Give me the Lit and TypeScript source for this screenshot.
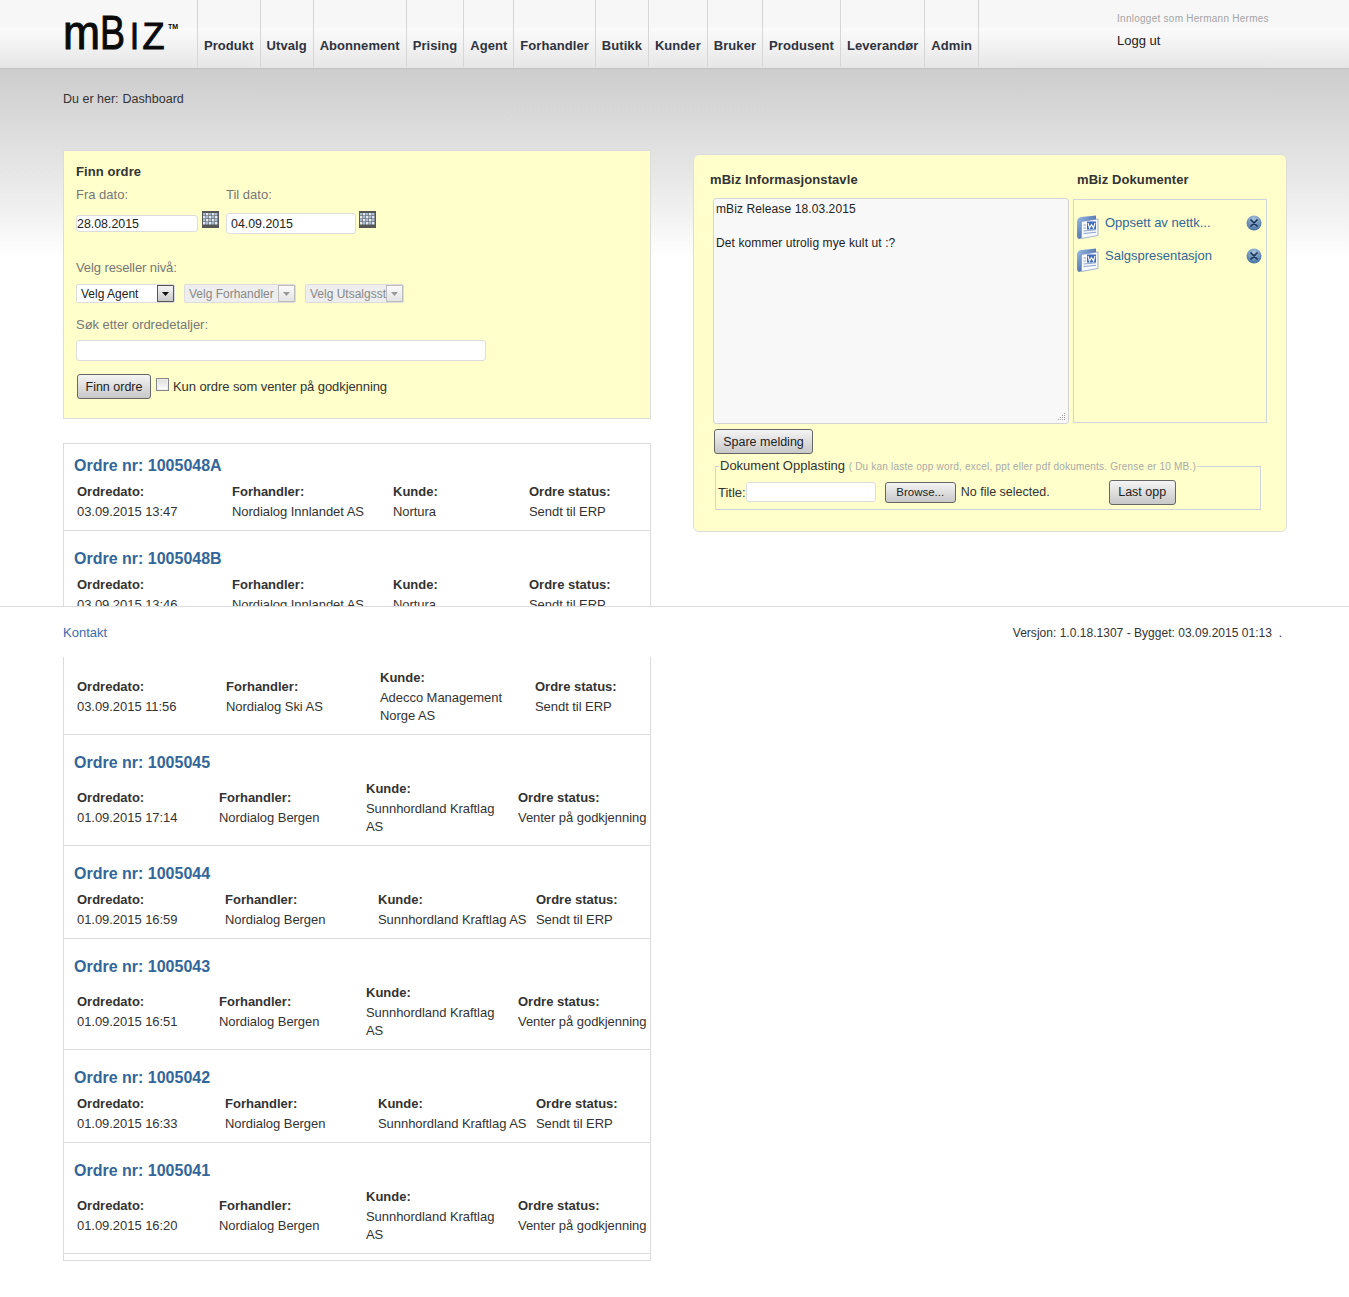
import { LitElement, html, css, svg } from "lit";
import { customElement } from "lit/decorators.js";

const NAV = ["Produkt", "Utvalg", "Abonnement", "Prising", "Agent", "Forhandler", "Butikk", "Kunder", "Bruker", "Produsent", "Leverandør", "Admin"];

type Order = { nr: string; date: string; dealer: string; customer: string[]; status: string; cols: string };

const ORDERS: Order[] = [
  { nr: "1005048A", date: "03.09.2015 13:47", dealer: "Nordialog Innlandet AS", customer: ["Nortura"], status: "Sendt til ERP", cols: "wide" },
  { nr: "1005048B", date: "03.09.2015 13:46", dealer: "Nordialog Innlandet AS", customer: ["Nortura"], status: "Sendt til ERP", cols: "wide" },
  { nr: "1005047", date: "03.09.2015 11:56", dealer: "Nordialog Ski AS", customer: ["Adecco Management", "Norge AS"], status: "Sendt til ERP", cols: "mid" },
  { nr: "1005045", date: "01.09.2015 17:14", dealer: "Nordialog Bergen", customer: ["Sunnhordland Kraftlag", "AS"], status: "Venter på godkjenning", cols: "wrap" },
  { nr: "1005044", date: "01.09.2015 16:59", dealer: "Nordialog Bergen", customer: ["Sunnhordland Kraftlag AS"], status: "Sendt til ERP", cols: "long" },
  { nr: "1005043", date: "01.09.2015 16:51", dealer: "Nordialog Bergen", customer: ["Sunnhordland Kraftlag", "AS"], status: "Venter på godkjenning", cols: "wrap" },
  { nr: "1005042", date: "01.09.2015 16:33", dealer: "Nordialog Bergen", customer: ["Sunnhordland Kraftlag AS"], status: "Sendt til ERP", cols: "long" },
  { nr: "1005041", date: "01.09.2015 16:20", dealer: "Nordialog Bergen", customer: ["Sunnhordland Kraftlag", "AS"], status: "Venter på godkjenning", cols: "wrap" },
];

// grid of small light cells on the dark calendar tile
const calendar = html`<svg class="cal" width="17" height="17" viewBox="0 0 17 17">
  <rect width="17" height="17" fill="#565656"/>
  ${[2, 5, 8, 11].flatMap((y, r) =>
    [1, 4, 7, 10, 13].map(
      (x, c) => svg`<rect x=${x} y=${y} width="2.500" height="2.500" fill=${(r + c) % 2 ? "#dfe7f2" : "#a9bdd6"}/>`
    )
  )}
</svg>`;

const wordIcon = html`<svg class="word" width="23" height="24" viewBox="0 0 23 24">
  <defs>
    <linearGradient id="wb" x1="0" y1="0" x2="1" y2="1"><stop offset="0" stop-color="#9fc0ea"/><stop offset="1" stop-color="#1f4088"/></linearGradient>
  </defs>
  <path d="M1 7Q1 3 5 2L20 0.500V5L6 7V23L3 24Q1 23.500 1 21Z" fill="url(#wb)"/>
  <path d="M5.500 6.500L22 4V20.500L5.500 23.500Z" fill="#f6f8fc" stroke="#7f96c4" stroke-width="0.700"/>
  <rect x="11" y="6.500" width="9" height="8" fill="#3f6bb8"/>
  <path d="M12 8L13.500 13L15.500 9.500L17.500 13L19 8" fill="none" stroke="#fff" stroke-width="1.100"/>
  <path d="M7.500 10H10M7.500 13H10M7.500 16L20 14.800M7.500 18.500L20 17.300" stroke="#8ea6d2" stroke-width="1"/>
</svg>`;

const removeIcon = html`<svg class="rm" width="16" height="16" viewBox="0 0 16 16">
  <defs>
    <radialGradient id="rb" cx="0.5" cy="0.25" r="0.85"><stop offset="0" stop-color="#a9c2dc"/><stop offset="1" stop-color="#38689c"/></radialGradient>
  </defs>
  <circle cx="8" cy="8" r="7.500" fill="url(#rb)"/>
  <path d="M5 5L11 11M11 5L5 11" stroke="#1c3558" stroke-width="1.700" stroke-linecap="round"/>
</svg>`;

const arrow = html`<svg width="7" height="4" viewBox="0 0 7 4"><path d="M0 0H7L3.500 4Z" fill="currentColor"/></svg>`;

const grip = html`<svg class="grip" width="9" height="9" viewBox="0 0 9 9">
  <path d="M7 1h1v1H7zM5 3h1v1H5zM7 3h1v1H7zM3 5h1v1H3zM5 5h1v1H5zM7 5h1v1H7zM1 7h1v1H1zM3 7h1v1H3zM5 7h1v1H5zM7 7h1v1H7z" fill="#a8a8a8"/>
</svg>`;

@customElement("app-root")
export class AppRoot extends LitElement {
  static styles = css`
    :host {
      display: block;
      position: relative;
      min-height: 1297px;
      background: #fff;
      color: #333;
      font-family: "Liberation Sans", Arial, sans-serif;
      font-size: 13px;
    }
    * { box-sizing: border-box; }

    .top {
      display: flex;
      height: 69px;
      padding-left: 63px;
      border-bottom: 1px solid #c4c4c4;
      background: linear-gradient(#f7f7f7 0, #f7f7f7 28px, #fbfbfb 28px, #e6e6e6 68px);
    }
    .logo { width: 134px; height: 68px; flex: none; }
    .logo text { font-family: "Liberation Sans", sans-serif; fill: #0a0a0a; }
    .logo .mark { stroke: #0a0a0a; stroke-width: 1; }
    nav { display: flex; }
    nav a {
      height: 67px;
      padding: 37px 6px 0 6px;
      border-left: 1px solid #d6d6d6;
      font-weight: 700;
      letter-spacing: 0.06px;
      line-height: 18px;
      color: #2f3340;
    }
    nav a:last-child { border-right: 1px solid #d6d6d6; }
    .user { margin-left: 138px; padding-top: 13px; }
    .user small { display: block; font-size: 10px; line-height: 12px; color: #a4a4a4; letter-spacing: 0.26px; }
    .user a { display: block; margin-top: 8px; font-size: 13px; line-height: 16px; color: #222; }

    main {
      height: 1228px;
      padding: 21px 0 0 63px;
      background: linear-gradient(#cdcdcd 0, #ebebeb 121px, #fff 190px);
    }
    .crumb { display: flex; gap: 4px; height: 18px; font-size: 12.500px; line-height: 18px; }
    .columns { display: flex; gap: 42px; margin-top: 42px; align-items: flex-start; }
    .left { width: 588px; }

    .find {
      height: 269px;
      padding: 12px 12px 0;
      background: #ffffcc;
      border: 1px solid #dcdcdc;
    }
    h2 { margin: 0; font-size: 13px; line-height: 18px; font-weight: 700; letter-spacing: 0.08px; color: #333; }
    .lab { display: block; font-size: 13px; line-height: 18px; color: #777; }
    .date-labels { display: flex; margin-top: 5px; }
    .date-labels .lab:first-child { width: 150px; }
    .dates { display: flex; height: 22px; margin-top: 7px; }
    .dates > div { display: flex; align-items: flex-start; }
    .dates > div:first-child { width: 150px; }
    input[type="text"] {
      display: block;
      border: 1px solid #ddd;
      border-radius: 3px;
      background: #fff;
      font: 12.400px "Liberation Sans", Arial, sans-serif;
      color: #222;
      outline: none;
    }
    .d1 { width: 122px; height: 17px; margin-top: 4px; padding: 0; }
    .d2 { width: 130px; height: 21px; margin-top: 2px; padding: 0 0 0 4px; }
    .cal { margin-left: 4px; flex: none; }
    .d2 + .cal { margin-left: 3px; }
    .lab.level { margin-top: 26px; letter-spacing: -0.1px; }
    .selects { display: flex; gap: 9px; margin-top: 7px; }
    .sel {
      display: flex;
      align-items: center;
      justify-content: space-between;
      height: 19px;
      padding-left: 4px;
      border: 1px solid #ddd;
      border-radius: 2px;
      background: #fff;
      font-size: 12px;
      color: #222;
      overflow: hidden;
      white-space: nowrap;
    }
    .sel i {
      display: flex;
      flex: none;
      align-items: center;
      justify-content: center;
      width: 17px;
      height: 17px;
      border: 1px solid #555;
      background: linear-gradient(#f5f5f5, #c9c9c9);
      color: #111;
    }
    .sel.off { background: #eee; color: #888; }
    .sel.off i { border-color: #bbb; background: linear-gradient(#fafafa, #e4e4e4); color: #999; }
    .s1 { width: 99px; }
    .s2 { width: 112px; }
    .s3 { width: 99px; }
    .s3 span { overflow: hidden; }
    .lab.search { margin-top: 13px; letter-spacing: -0.04px; }
    .q { width: 410px; height: 21px; margin-top: 6px; }
    .act { display: flex; align-items: center; margin-top: 13px; padding-left: 1px; }
    button {
      border: 1px solid #666;
      border-radius: 3px;
      background: linear-gradient(#f4f4f4, #c8c8c8);
      font: 12.500px "Liberation Sans", Arial, sans-serif;
      color: #222;
      padding: 0;
    }
    .act button { width: 74px; height: 25px; }
    .box {
      width: 13px;
      height: 13px;
      margin: -4px 4px 0 5px;
      border: 1px solid #888;
      background: linear-gradient(#ddd, #fff);
      box-shadow: inset 0 0 0 1px #eee;
    }
    .act span { font-size: 13px; letter-spacing: -0.08px; color: #333; }

    .orders { margin-top: 24px; border: 1px solid #dcdcdc; background: #fff; padding-bottom: 6px; }
    .order { padding: 18px 0 9px; border-bottom: 1px solid #dcdcdc; }
    .order:first-child { padding-top: 12px; }
    .order h3 { margin: 0 0 6px 10px; font-size: 16px; line-height: 20px; font-weight: 700; color: #336699; }
    .cells { display: grid; align-items: center; padding-left: 13px; white-space: nowrap; }
    .wide { grid-template-columns: 155px 161px 136px 1fr; }
    .mid { grid-template-columns: 149px 154px 155px 1fr; }
    .wrap { grid-template-columns: 142px 147px 152px 1fr; }
    .long { grid-template-columns: 148px 153px 158px 1fr; }
    .cells b { display: block; height: 21px; line-height: 20px; font-size: 13px; color: #333; }
    .cells p { margin: 0; font-size: 13px; line-height: 18px; letter-spacing: -0.05px; color: #333; }

    .board {
      position: relative;
      width: 594px;
      height: 378px;
      margin-top: 4px;
      padding: 16px 0 0 16px;
      background: #ffffcc;
      border: 1px solid #dcdcdc;
      border-radius: 6px;
    }
    .heads { display: flex; }
    .heads h2:first-child { width: 367px; }
    .panes { display: flex; gap: 4px; margin: 9px 0 0 3px; }
    .note { position: relative; width: 356px; height: 226px; }
    textarea {
      display: block;
      width: 100%;
      height: 100%;
      margin: 0;
      padding: 2px;
      border: 1px solid #d4d4d4;
      border-radius: 3px;
      background: #f8f8f8;
      font: 12px/17px "Liberation Sans", Arial, sans-serif;
      letter-spacing: 0.1px;
      color: #222;
      outline: none;
      resize: none;
    }
    .grip { position: absolute; right: 3px; bottom: 3px; }
    .docs { width: 194px; height: 224px; margin-top: 1px; padding: 15px 4px 0 2px; border: 1px solid #d0d4dc; }
    .doc { display: flex; height: 33px; }
    .doc a { flex: 1; padding-left: 6px; font-size: 13px; line-height: 16px; color: #336699; }
    .save { display: block; width: 99px; height: 25px; margin: 5px 0 0 4px; }
    fieldset {
      width: 546px;
      height: 52px;
      margin: 4px 0 0 5px;
      padding: 0 0 0 2px;
      border: 1px solid #d0d4dc;
    }
    legend { margin-left: 1px; padding: 0 1px; font-size: 13px; line-height: 16px; color: #333; }
    legend small { font-size: 10px; color: #aaa; letter-spacing: 0.21px; }
    .upload { display: flex; align-items: center; height: 28px; margin-top: 3px; font-size: 13px; color: #333; }
    .upload input { width: 130px; height: 20px; }
    .browse { width: 71px; height: 21px; margin-left: 9px; font-size: 11.500px; }
    .nofile { margin-left: 5px; width: 148px; font-size: 12.500px; }
    .send { width: 67px; height: 25px; }

    footer {
      position: absolute;
      top: 606px;
      left: 0;
      right: 0;
      display: flex;
      justify-content: space-between;
      height: 51px;
      padding: 18px 67px 0 63px;
      border-top: 1px solid #dcdcdc;
      background: #fff;
      font-size: 12px;
      line-height: 16px;
    }
    footer a { font-size: 13px; color: #3b6cb0; }
    footer span { letter-spacing: 0.02px; }
  `;

  render() {
    return html`
      <header class="top">
        <svg class="logo" viewBox="0 0 134 68">
          <text class="mark" x="0" y="49" font-size="48" textLength="37" lengthAdjust="spacingAndGlyphs">m</text>
          <text class="mark" x="37" y="48.500" font-size="48" textLength="25" lengthAdjust="spacingAndGlyphs">B</text>
          <text class="mark" x="67" y="48.500" font-size="36" textLength="9" lengthAdjust="spacingAndGlyphs">I</text>
          <text class="mark" x="79.500" y="48.500" font-size="36" textLength="22" lengthAdjust="spacingAndGlyphs">Z</text>
          <text x="105" y="29" font-size="7" font-weight="700">TM</text>
        </svg>
        <nav>${NAV.map((n) => html`<a>${n}</a>`)}</nav>
        <div class="user">
          <small>Innlogget som Hermann Hermes</small>
          <a>Logg ut</a>
        </div>
      </header>

      <main>
        <div class="crumb"><span>Du er her:</span><span>Dashboard</span></div>
        <div class="columns">
          <div class="left">
            <section class="find">
              <h2>Finn ordre</h2>
              <div class="date-labels">
                <span class="lab">Fra dato:</span>
                <span class="lab">Til dato:</span>
              </div>
              <div class="dates">
                <div><input type="text" class="d1" value="28.08.2015" />${calendar}</div>
                <div><input type="text" class="d2" value="04.09.2015" />${calendar}</div>
              </div>
              <span class="lab level">Velg reseller nivå:</span>
              <div class="selects">
                <div class="sel s1"><span>Velg Agent</span><i>${arrow}</i></div>
                <div class="sel off s2"><span>Velg Forhandler</span><i>${arrow}</i></div>
                <div class="sel off s3"><span>Velg Utsalgssted</span><i>${arrow}</i></div>
              </div>
              <span class="lab search">Søk etter ordredetaljer:</span>
              <input type="text" class="q" />
              <div class="act">
                <button>Finn ordre</button>
                <div class="box"></div>
                <span>Kun ordre som venter på godkjenning</span>
              </div>
            </section>

            <section class="orders">
              ${ORDERS.map(
                (o) => html`
                  <article class="order">
                    <h3>Ordre nr: ${o.nr}</h3>
                    <div class="cells ${o.cols}">
                      <div><b>Ordredato:</b><p>${o.date}</p></div>
                      <div><b>Forhandler:</b><p>${o.dealer}</p></div>
                      <div><b>Kunde:</b>${o.customer.map((c) => html`<p>${c}</p>`)}</div>
                      <div><b>Ordre status:</b><p>${o.status}</p></div>
                    </div>
                  </article>
                `
              )}
            </section>
          </div>

          <section class="board">
            <div class="heads"><h2>mBiz Informasjonstavle</h2><h2>mBiz Dokumenter</h2></div>
            <div class="panes">
              <div class="note">
                <textarea .value=${"mBiz Release 18.03.2015\n\nDet kommer utrolig mye kult ut :?"}></textarea>
                ${grip}
              </div>
              <div class="docs">
                <div class="doc">${wordIcon}<a>Oppsett av nettk...</a>${removeIcon}</div>
                <div class="doc">${wordIcon}<a>Salgspresentasjon</a>${removeIcon}</div>
              </div>
            </div>
            <button class="save">Spare melding</button>
            <fieldset>
              <legend>Dokument Opplasting <small>( Du kan laste opp word, excel, ppt eller pdf dokuments. Grense er 10 MB.)</small></legend>
              <div class="upload">
                <span>Title:</span>
                <input type="text" />
                <button class="browse">Browse...</button>
                <span class="nofile">No file selected.</span>
                <button class="send">Last opp</button>
              </div>
            </fieldset>
          </section>
        </div>
      </main>

      <footer>
        <a>Kontakt</a>
        <span>Versjon: 1.0.18.1307 - Bygget: 03.09.2015 01:13 &nbsp;.</span>
      </footer>
    `;
  }
}
